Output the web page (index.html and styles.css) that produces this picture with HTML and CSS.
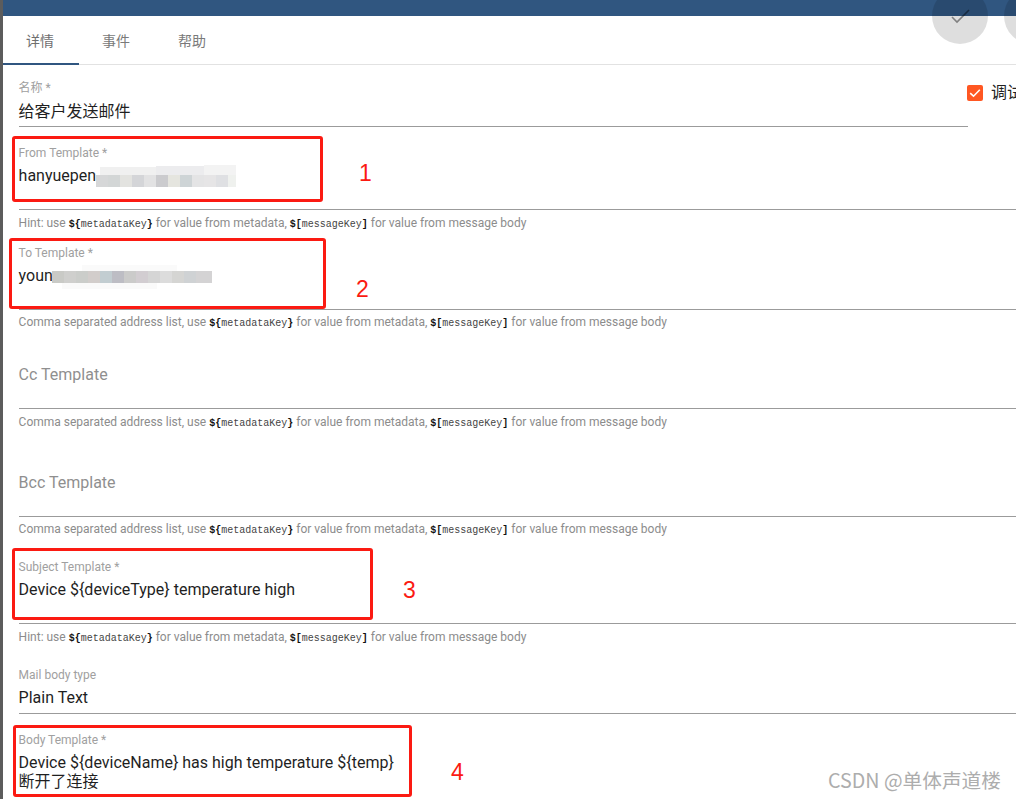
FILE: index.html
```html
<!DOCTYPE html>
<html lang="zh">
<head>
<meta charset="utf-8">
<title>给客户发送邮件</title>
<link rel="stylesheet" href="styles.css">
</head>
<body>
<div class="strip"></div>
<main class="panel">
  <header class="topbar"></header>
  <button class="fab fab-save" aria-label="保存">
    <svg width="24" height="24" viewBox="0 0 24 24"><path d="M4 13 L9 18 L21 6" fill="none" stroke="#000" stroke-opacity="0.42" stroke-width="1.6"/></svg>
  </button>
  <button class="fab fab-close" aria-label="关闭"></button>
  <nav class="tabs">
    <span class="tab active">详情</span>
    <span class="tab">事件</span>
    <span class="tab">帮助</span>
  </nav>
  <form class="form">
    <div class="row-name">
      <div class="field field-name">
        <label class="label">名称 *</label>
        <div class="value value-name">给客户发送邮件</div>
      </div>
      <div class="debug">
        <span class="checkbox"><svg width="16" height="16" viewBox="0 0 16 16"><path d="M3.2 8.2 L6.5 11.2 L12.8 4.8" fill="none" stroke="#fff" stroke-width="1.6"/></svg></span>
        <span class="debug-text">调试</span>
      </div>
    </div>
    <div class="field field-tall f-from">
      <label class="label">From Template *</label>
      <div class="value">hanyuepen</div>
    </div>
    <p class="hint">Hint: use <code>${</code><code class="key">metadataKey</code><code>}</code> for value from metadata, <code>$[</code><code class="key">messageKey</code><code>]</code> for value from message body</p>
    <div class="field field-tall f-to">
      <label class="label">To Template *</label>
      <div class="value">youn</div>
    </div>
    <p class="hint hint-to">Comma separated address list, use <code>${</code><code class="key">metadataKey</code><code>}</code> for value from metadata, <code>$[</code><code class="key">messageKey</code><code>]</code> for value from message body</p>
    <div class="field field-tall f-cc">
      <div class="placeholder">Cc Template</div>
    </div>
    <p class="hint">Comma separated address list, use <code>${</code><code class="key">metadataKey</code><code>}</code> for value from metadata, <code>$[</code><code class="key">messageKey</code><code>]</code> for value from message body</p>
    <div class="field field-tall f-bcc">
      <div class="placeholder">Bcc Template</div>
    </div>
    <p class="hint hint-to">Comma separated address list, use <code>${</code><code class="key">metadataKey</code><code>}</code> for value from metadata, <code>$[</code><code class="key">messageKey</code><code>]</code> for value from message body</p>
    <div class="field field-tall f-subject">
      <label class="label">Subject Template *</label>
      <div class="value">Device ${deviceType} temperature high</div>
    </div>
    <p class="hint">Hint: use <code>${</code><code class="key">metadataKey</code><code>}</code> for value from metadata, <code>$[</code><code class="key">messageKey</code><code>]</code> for value from message body</p>
    <div class="field f-type">
      <label class="label">Mail body type</label>
      <div class="value">Plain Text</div>
    </div>
    <div class="field f-body">
      <label class="label">Body Template *</label>
      <div class="value">Device ${deviceName} has high temperature ${temp}</div>
      <div class="value value-second">断开了连接</div>
    </div>
  </form>
</main>

<svg class="mosaic mosaic-from" width="140" height="24" viewBox="0 0 140 24">
  <g shape-rendering="crispEdges">
    <rect x="4" y="4" width="56" height="8" fill="#f0f0f0"/>
    <rect x="60" y="3" width="72" height="9" fill="#ececee"/>
    <rect x="108" y="2" width="32" height="10" fill="#f3f3f3"/>
    <rect x="0" y="12" width="12" height="12" fill="#d6d7d8"/>
    <rect x="12" y="12" width="12" height="12" fill="#d3d6d6"/>
    <rect x="24" y="12" width="12" height="12" fill="#e3e3e0"/>
    <rect x="36" y="12" width="12" height="12" fill="#d4d5d8"/>
    <rect x="48" y="12" width="12" height="12" fill="#e2e2e3"/>
    <rect x="60" y="12" width="12" height="12" fill="#cbcbce"/>
    <rect x="72" y="12" width="12" height="12" fill="#e5e5df"/>
    <rect x="84" y="12" width="12" height="12" fill="#ced4d6"/>
    <rect x="96" y="12" width="12" height="12" fill="#e4e4e5"/>
    <rect x="108" y="12" width="12" height="12" fill="#e6e5e6"/>
    <rect x="120" y="12" width="12" height="12" fill="#dfe0e3"/>
    <rect x="132" y="12" width="8" height="12" fill="#eff1ee"/>
  </g>
</svg>
<svg class="mosaic mosaic-to" width="160" height="24" viewBox="0 0 160 24">
  <g shape-rendering="crispEdges">
    <rect x="30" y="0" width="95" height="6" fill="#fafafa"/>
    <rect x="10" y="18" width="95" height="6" fill="#fafafa"/>
    <rect x="0" y="6" width="12" height="12" fill="#c9cac6"/>
    <rect x="12" y="6" width="12" height="12" fill="#cfcfcd"/>
    <rect x="24" y="6" width="12" height="12" fill="#cbcdca"/>
    <rect x="36" y="6" width="12" height="12" fill="#d2cdcb"/>
    <rect x="48" y="6" width="12" height="12" fill="#c2cdd1"/>
    <rect x="60" y="6" width="12" height="12" fill="#bdbdc4"/>
    <rect x="72" y="6" width="12" height="12" fill="#cbcbca"/>
    <rect x="84" y="6" width="12" height="12" fill="#d2cdd1"/>
    <rect x="96" y="6" width="12" height="12" fill="#d5d5d5"/>
    <rect x="108" y="6" width="12" height="12" fill="#dcdcdc"/>
    <rect x="120" y="6" width="12" height="12" fill="#d5d5d3"/>
    <rect x="132" y="6" width="12" height="12" fill="#cfd2d4"/>
    <rect x="144" y="6" width="16" height="12" fill="#d4d3d4"/>
  </g>
</svg>

<div class="note note-1"></div>
<div class="note note-2"></div>
<div class="note note-3"></div>
<div class="note note-4"></div>
<span class="num num-1">1</span>
<span class="num num-2">2</span>
<span class="num num-3">3</span>
<span class="num num-4">4</span>
<div class="watermark">CSDN @单体声道楼</div>
</body>
</html>
```
FILE: styles.css
```css
html, body {
  margin: 0;
  padding: 0;
  width: 1016px;
  height: 799px;
  overflow: hidden;
  background: #fff;
  font-family: Roboto, "Noto Sans CJK SC", sans-serif;
}

body {
  display: flex;
  position: relative;
}

.strip {
  width: 3px;
  flex: none;
  background: #5c5c5c;
}

.panel {
  flex: 1;
  min-width: 0;
  height: 799px;
  background: #fff;
  position: relative;
  overflow: hidden;
}

.topbar {
  height: 16px;
  background: #305680;
}

.fab {
  position: absolute;
  top: -12px;
  width: 56px;
  height: 56px;
  padding: 0;
  border: 0;
  border-radius: 50%;
  background: rgba(0, 0, 0, 0.13);
  display: flex;
  align-items: center;
  justify-content: center;
}

.fab-save { left: 929px; }
.fab-close { left: 1001px; }

.tabs {
  display: flex;
  height: 48px;
  border-bottom: 1px solid #e2e2e2;
}

.tab {
  width: 76px;
  box-sizing: border-box;
  padding-right: 2px;
  text-align: center;
  font-size: 14px;
  line-height: 50px;
  color: #7a7a7a;
  height: 48px;
}

.tab.active {
  border-bottom: 2px solid #305680;
  height: 49px;
  color: #6f6f6f;
}

.form {
  padding: 16px 0 0 15.6px;
  width: 1040px;
  box-sizing: border-box;
}

.row-name {
  display: flex;
  align-items: flex-start;
}

.field {
  border-bottom: 1px solid #9b9b9b;
  box-sizing: content-box;
}

.field-name {
  width: 949.4px;
  padding-bottom: 4px;
}

.debug {
  display: flex;
  align-items: center;
  gap: 8px;
  margin: 4px 0 0 -1px;
  flex: none;
}

.checkbox {
  width: 16px;
  height: 16px;
  border-radius: 2px;
  background: #ff5722;
  display: block;
}

.checkbox svg { display: block; }

.debug-text {
  font-size: 16px;
  line-height: 16px;
  color: #222;
  white-space: nowrap;
}

.label {
  display: block;
  font-size: 12px;
  line-height: 14px;
  color: #a0a0a0;
}

.value {
  margin-top: 6px;
  font-size: 16px;
  line-height: 20px;
  color: #1f1f1f;
  white-space: nowrap;
}

.value-name { margin-top: 7px; }

.value-second {
  margin-top: -1px;
  line-height: 19px;
}

.placeholder {
  font-size: 16px;
  line-height: 20px;
  color: #8f8f8f;
}

.field-tall { padding-bottom: 23px; }

.f-from { margin-top: 19px; }
.f-to { margin-top: 14px; }
.f-cc { margin-top: 34px; }
.f-bcc { margin-top: 42px; }
.f-subject { margin-top: 22px; }
.f-type { margin-top: 22px; padding-bottom: 5px; }
.f-body { margin-top: 19px; border-bottom: 0; }

.hint {
  margin: 6px 0 0;
  font-size: 12px;
  line-height: 14px;
  color: #8c8c8c;
  white-space: nowrap;
}

.hint-to { margin-top: 5px; }

.hint code {
  font-family: "Liberation Mono", monospace;
  font-size: 10px;
  font-weight: 700;
  color: #111;
}

.hint code.key {
  font-weight: 400;
  color: #444;
}

.mosaic {
  position: absolute;
  display: block;
}

.mosaic-from { left: 96px; top: 163px; }
.mosaic-to { left: 52px; top: 265px; }

.note {
  position: absolute;
  box-sizing: border-box;
  border: 3px solid #fb1a12;
  border-radius: 3px;
}

.note-1 { left: 12px; top: 136px; width: 311px; height: 66px; }
.note-2 { left: 9px; top: 238px; width: 317px; height: 71px; }
.note-3 { left: 12px; top: 548px; width: 361px; height: 72px; }
.note-4 { left: 13px; top: 725px; width: 399px; height: 72px; }

.num {
  position: absolute;
  font-family: "Liberation Sans", sans-serif;
  font-size: 23px;
  line-height: 26px;
  color: #fb1a12;
}

.num-1 { left: 359px; top: 160px; }
.num-2 { left: 356px; top: 276px; }
.num-3 { left: 403px; top: 577px; }
.num-4 { left: 451px; top: 759px; }

.watermark {
  position: absolute;
  right: 15px;
  top: 769px;
  font-family: "Noto Sans CJK SC", "Noto Sans", sans-serif;
  font-size: 19.7px;
  line-height: 22px;
  color: #adadad;
  white-space: nowrap;
}
```
